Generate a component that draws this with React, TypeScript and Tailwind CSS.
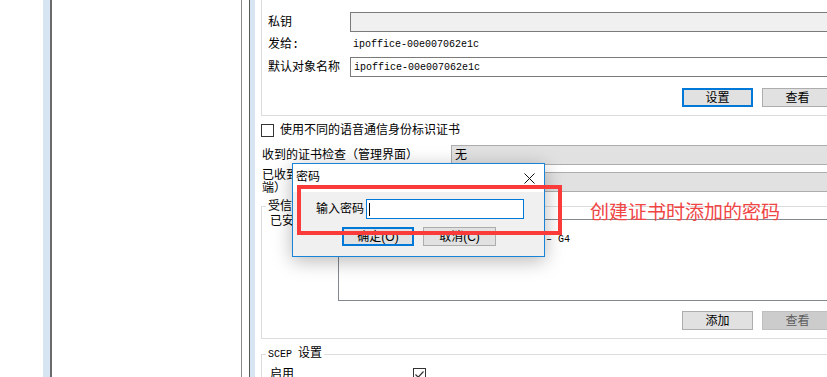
const cjk = "font-['Liberation_Sans','Noto_Sans_CJK_SC',sans-serif]"
const mono = "font-['Liberation_Mono','Noto_Sans_CJK_SC',monospace]"

const WinButton = ({ label, focused, disabled }: { label: string; focused?: boolean; disabled?: boolean }): JSX.Element => {
  let cls = 'border border-[#adadad] bg-[#e1e1e1] text-black'
  if (focused) cls = 'border-2 border-[#0078d7] bg-[#e1e1e1] text-black'
  if (disabled) cls = 'border border-[#bfbfbf] bg-[#cccccc] text-[#5e5e5e]'
  return (
    <div className={`flex h-[19px] w-[71px] items-center justify-center text-[12px] leading-none ${cls}`}>
      {label}
    </div>
  )
}

const CheckBox = ({ checked }: { checked?: boolean }): JSX.Element => (
  <div className="flex h-[13px] w-[13px] shrink-0 items-center justify-center border border-[#333333] bg-white">
    {checked && (
      <svg width="11" height="11" viewBox="0 0 11 11">
        <path d="M1.5 5.5 L4.2 8.2 L9.5 2.5" fill="none" stroke="#333333" strokeWidth="1.2" />
      </svg>
    )}
  </div>
)

const App = (): JSX.Element => {
  return (
    <div className={`relative flex h-[377px] w-[827px] overflow-hidden bg-white text-[12px] text-black ${cjk}`}>
      {/* left tree pane */}
      <div className="w-[43px] shrink-0" />
      <div className="w-[7px] shrink-0 bg-[#d7e4f2]" />
      <div className="w-[192px] shrink-0 border-l-2 border-r border-l-[#6b6b6b] border-r-[#8a8a8a]" />
      <div className="w-[7px] shrink-0" />
      <div className="w-[6px] shrink-0 border-l border-l-[#5a5a5a] bg-[#d7e4f2]" />

      {/* right settings pane */}
      <div className="w-[592px] shrink-0 px-[6px]">
        <div className="border-b border-l border-r border-[#dcdcdc] pb-[8px] pl-[6px] pr-[7px] pt-[12px]">
          <div className="flex h-[20px] items-center">
            <span className="w-[82px] shrink-0">私钥</span>
            <div className="h-[20px] flex-1 border border-[#7a7a7a] bg-[#f0f0f0]" />
          </div>
          <div className="flex h-[24px] items-center">
            <span className="w-[82px] shrink-0">发给<span className={mono}>:</span></span>
            <span className={`pl-[3px] text-[10px] ${mono}`}>ipoffice-00e007062e1c</span>
          </div>
          <div className="mt-[1px] flex h-[20px] items-center">
            <span className="w-[82px] shrink-0">默认对象名称</span>
            <div className={`flex h-[20px] flex-1 items-center border border-[#7a7a7a] bg-white pl-[3px] text-[10px] ${mono}`}>
              ipoffice-00e007062e1c
            </div>
          </div>
          <div className="mt-[11px] flex justify-end gap-[9px]">
            <WinButton label="设置" focused />
            <WinButton label="查看" />
          </div>
        </div>

        <div className="mt-[8px] flex h-[13px] items-center">
          <CheckBox />
          <span className="ml-[6px] leading-[13px]">使用不同的语音通信身份标识证书</span>
        </div>

        <div className="mt-[8px] flex h-[20px] items-center">
          <span className="w-[190px] shrink-0 pl-[1px]">收到的证书检查（管理界面）</span>
          <div className="flex h-[20px] flex-1 items-center border border-[#adadad] bg-[#e1e1e1] pl-[3px]">无</div>
        </div>
        <div className="mt-[7px] flex h-[20px] items-start">
          <span className="-mt-[3px] w-[190px] shrink-0 pl-[1px] leading-[13px]">
            已收到的证书检查（电话
            <br />
            端）
          </span>
          <div className="h-[20px] flex-1 border border-[#adadad] bg-[#e1e1e1]" />
        </div>

        <fieldset className="mt-[7px] border border-[#dcdcdc] pb-[8px] pl-[4px] pr-[7px] pt-[1px]">
          <legend className="px-[2px] leading-[14px]">受信任的证书</legend>
          <div className="flex items-start">
            <span className="ml-[4px] w-[68px] shrink-0 whitespace-nowrap leading-[14px]">已安装的</span>
            <div className={`mt-[5px] h-[82px] flex-1 border border-[#828790] bg-white pl-[3px] pt-[2px] text-[10px] leading-[12px] ${mono}`}>
              <div>Avaya SIP Product Root CA</div>
              <div>Avaya Product Root Certificate CA – G4</div>
            </div>
          </div>
          <div className="mt-[10px] flex justify-end gap-[9px]">
            <WinButton label="添加" />
            <WinButton label="查看" disabled />
          </div>
        </fieldset>

        <fieldset className="mt-[7px] border border-[#dcdcdc] pl-[4px] pt-[6px]">
          <legend className="px-[2px] leading-[14px]">
            <span className={`text-[10px] ${mono}`}>SCEP </span>设置
          </legend>
          <div className="flex items-start">
            <span className="ml-[4px] w-[143px] shrink-0 leading-[13px]">启用</span>
            <CheckBox checked />
          </div>
        </fieldset>
      </div>

      {/* password dialog */}
      <div className="absolute left-[292px] top-[163px] flex h-[94px] w-[253px] flex-col border border-[#1883d7] bg-[#f0f0f0] shadow-[0_4px_18px_rgba(0,0,0,0.28)]">
        <div className="flex h-[28px] items-start justify-between bg-white pl-[3px] pr-[9px] pt-[6px]">
          <span className="leading-[14px]">密码</span>
          <svg width="11" height="11" viewBox="0 0 11 11" className="mt-[3px]">
            <path d="M0.5 0.5 L10.5 10.5 M10.5 0.5 L0.5 10.5" stroke="#111111" strokeWidth="1" />
          </svg>
        </div>
        <div className="mt-[7px] flex items-center pl-[23px]">
          <span className="w-[50px] shrink-0">输入密码</span>
          <div className="flex h-[20px] w-[158px] items-center border border-[#0078d7] bg-white">
            <div className="ml-[2px] h-[13px] w-px bg-black" />
          </div>
        </div>
        <div className="mt-[8px] flex gap-[9px] pl-[49px]">
          <div className="flex h-[19px] w-[72px] items-center justify-center border-2 border-[#0078d7] bg-[#e1e1e1]">确定(O)</div>
          <div className="flex h-[19px] w-[73px] items-center justify-center border border-[#adadad] bg-[#e1e1e1]">取消(C)</div>
        </div>
      </div>

      {/* annotation */}
      <div className="absolute left-[297px] top-[185px] h-[50px] w-[265px] border-4 border-[#fb3a3a]" />
      <div className={`absolute left-[590px] top-[203px] text-[19px] leading-[20px] text-[#f04545] ${cjk}`}>
        创建证书时添加的密码
      </div>
    </div>
  )
}

export default App
